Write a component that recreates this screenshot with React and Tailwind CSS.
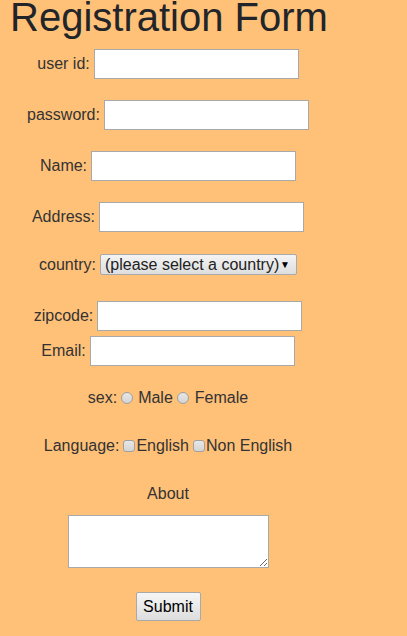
import React from 'react';

const inputCls = 'w-[205px] h-[30px] bg-white border border-[#a9a9a9] px-1 outline-none';

const Row = ({ label, mt, children }) => (
  <div className={`flex items-center justify-center gap-[4px] ${mt}`}>
    <span>{label}</span>
    {children}
  </div>
);

const Radio = () => (
  <span className="inline-block w-[12px] h-[12px] rounded-full border border-[#a0a0a0] bg-gradient-to-b from-[#e8e8e8] to-[#d4d4d4]" />
);

const Check = () => (
  <span className="inline-block w-[12px] h-[12px] rounded-[3px] border border-[#a0a0a0] bg-gradient-to-b from-[#e8e8e8] to-[#d4d4d4]" />
);

const App = () => {
  return (
    <div className="min-h-[636px] bg-[#ffc078] text-[#333] text-[16px] leading-[18px] pl-[10px] pt-px" style={{ fontFamily: "'Liberation Sans', Arial, sans-serif" }}>
      <h1 className="text-[40px] leading-[40px] -mt-[4px] text-[#212529] font-normal">Registration Form</h1>
      <form className="w-[316px] flex flex-col text-center" onSubmit={e => e.preventDefault()}>
        <Row label="user id:" mt="mt-[12px]"><input className={inputCls} /></Row>
        <Row label="password:" mt="mt-[21px]"><input type="password" className={inputCls} /></Row>
        <Row label="Name:" mt="mt-[21px]"><input className={inputCls} /></Row>
        <Row label="Address:" mt="mt-[21px]"><input className={inputCls} /></Row>
        <Row label="country:" mt="mt-[22px]">
          <div className="w-[197px] h-[21px] flex items-center justify-between border border-[#a9a9a9] rounded-[2px] bg-gradient-to-b from-[#f4f4f4] to-[#dedede] pl-[4px] pr-[6px] text-[#222] leading-none">
            <span>(please select a country)</span>
            <span className="text-[10px] text-black">▼</span>
          </div>
        </Row>
        <Row label="zipcode:" mt="mt-[26px]"><input className={inputCls} /></Row>
        <Row label="Email:" mt="mt-[5px]"><input className={inputCls} /></Row>
        <div className="mt-[23px] h-[18px] flex items-center justify-center">
          <span>sex:</span>
          <span className="ml-[4px] mr-[5px] flex"><Radio /></span>
          <span>Male</span>
          <span className="ml-[4px] mr-[6px] flex"><Radio /></span>
          <span>Female</span>
        </div>
        <div className="mt-[30px] h-[18px] flex items-center justify-center">
          <span>Language:</span>
          <span className="ml-[4px] mr-[1px] flex"><Check /></span>
          <span>English</span>
          <span className="ml-[4px] mr-[1px] flex"><Check /></span>
          <span>Non English</span>
        </div>
        <div className="mt-[30px] h-[18px]">About</div>
        <div className="mt-[12px] flex justify-center">
          <textarea className="w-[201px] h-[53px] bg-white border border-[#a9a9a9] outline-none" />
        </div>
        <div className="mt-[24px] flex justify-center">
          <button type="submit" className="w-[65px] h-[29px] border border-[#a9a9a9] rounded-[2px] bg-gradient-to-b from-[#f6f6f6] to-[#dddddd] text-black">Submit</button>
        </div>
      </form>
    </div>
  );
};

export default App;
